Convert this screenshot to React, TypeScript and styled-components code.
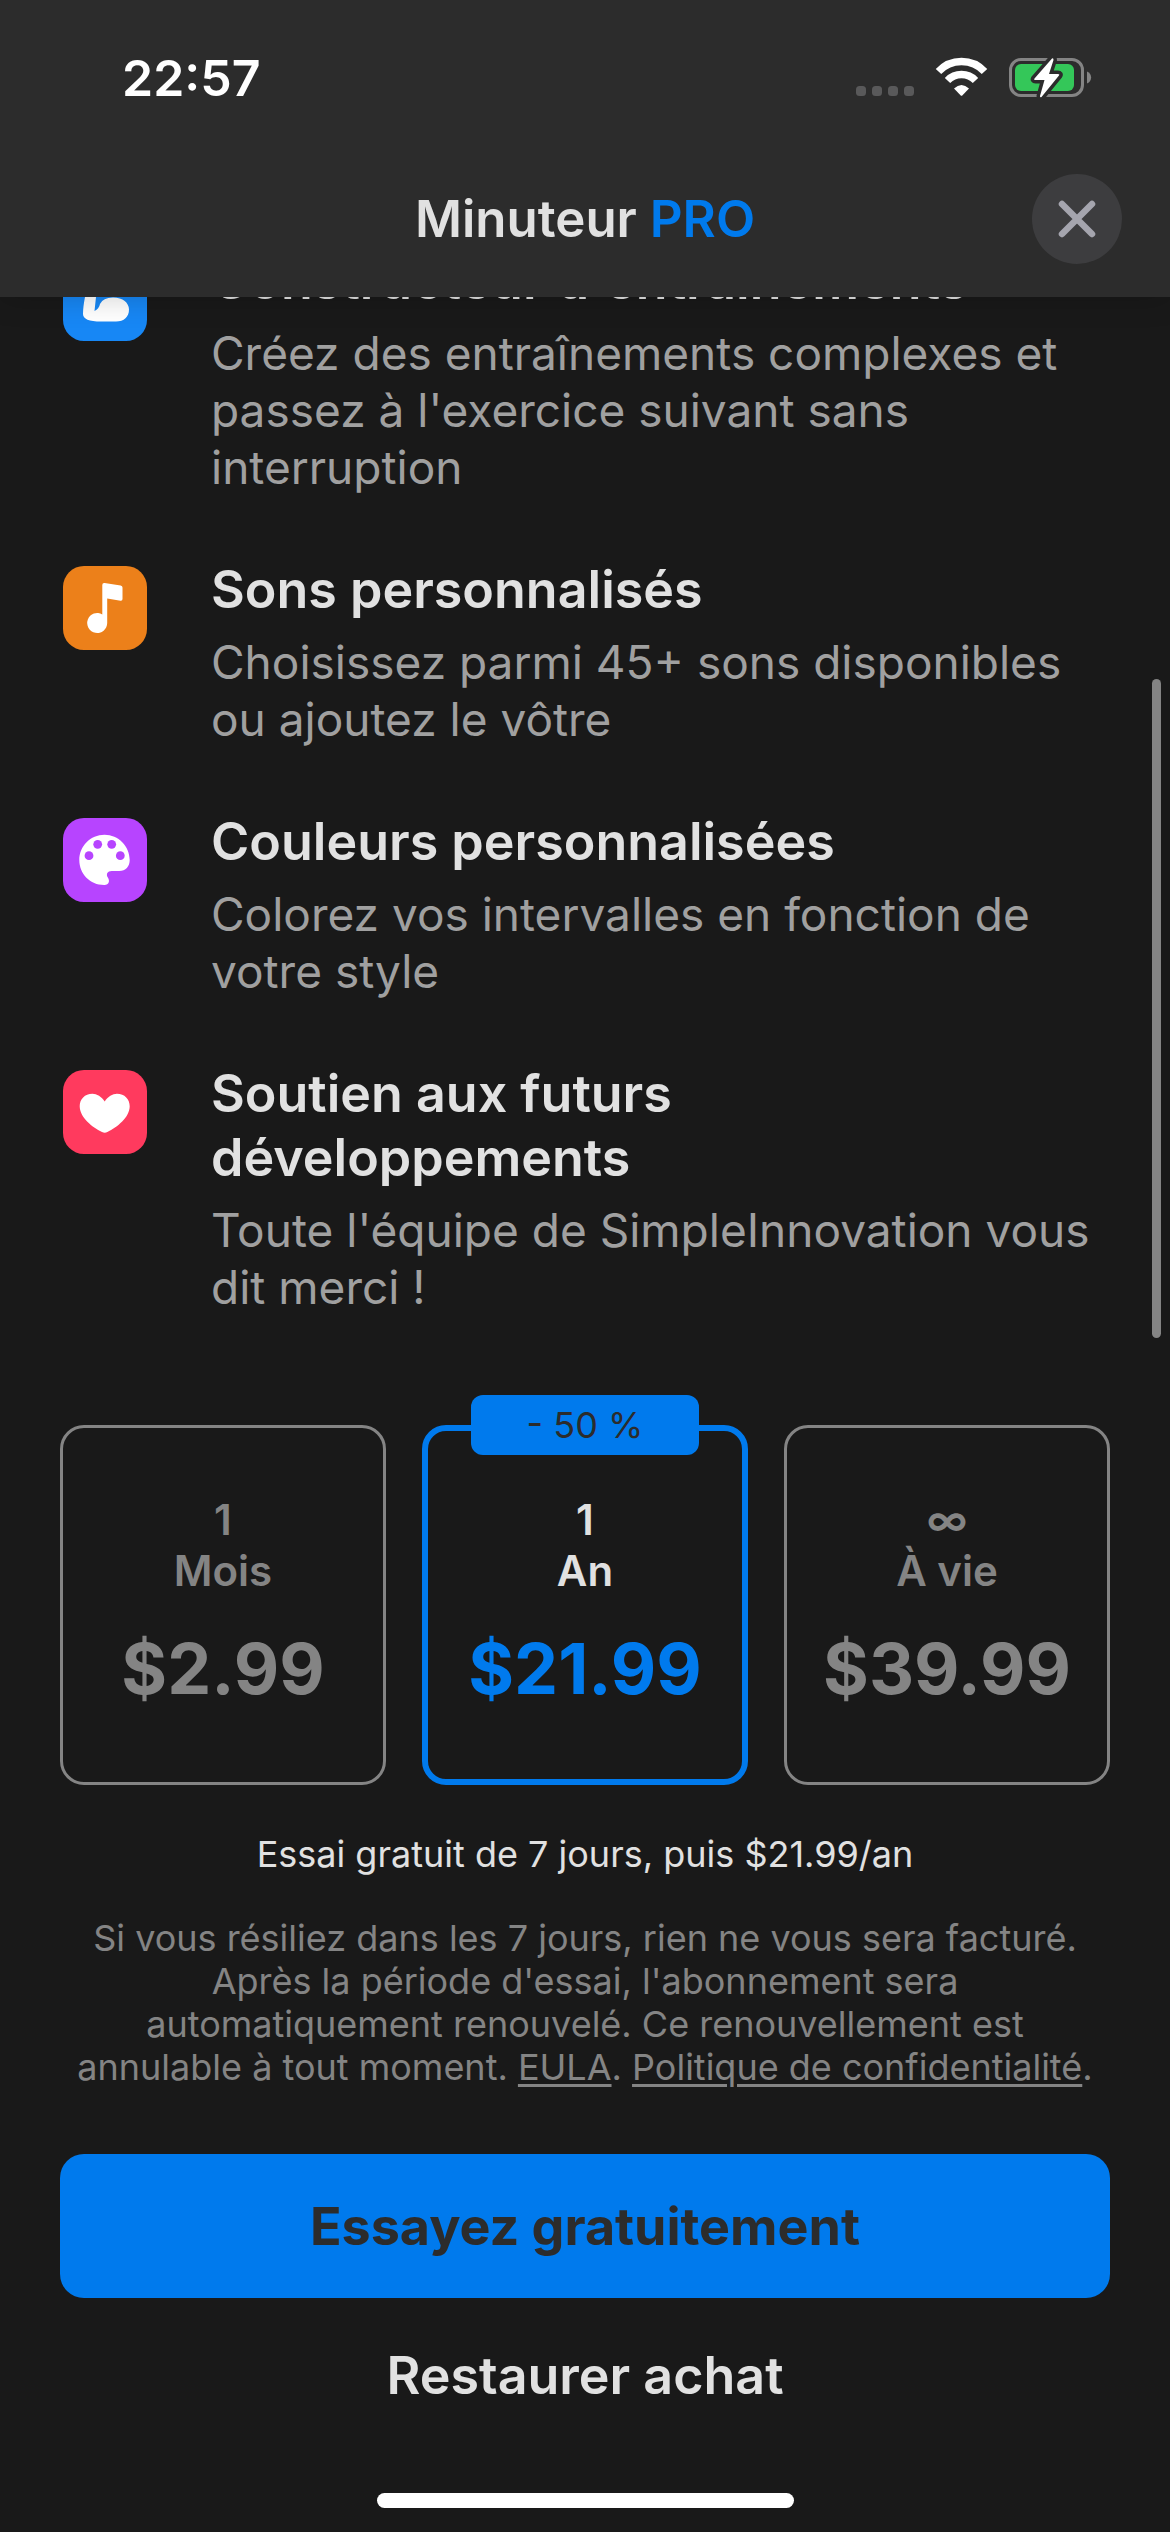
import React, { useState } from "react";
import styled, { createGlobalStyle } from "styled-components";

const blue = "#007aed";

const GlobalStyle = createGlobalStyle`
  * { box-sizing: border-box; }
  html, body { margin: 0; background: #191919; }
  body { font-family: Inter, "Liberation Sans", sans-serif; color: #e1e1e1; }
  button { font: inherit; border: 0; padding: 0; cursor: pointer; }
  h1, h2, p, ul { margin: 0; padding: 0; }
`;

const Screen = styled.div`
  position: relative;
  display: flex;
  flex-direction: column;
  min-height: 100vh;
  overflow: hidden;
`;

const Header = styled.header`
  position: relative;
  z-index: 1;
  background: #2c2c2c;
  box-shadow: 0 0 30px rgba(0, 0, 0, 0.2);
`;

const StatusBar = styled.div`
  display: flex;
  align-items: center;
  justify-content: space-between;
  height: 156px;
  padding: 0 78px 0 122px;
  color: #fff;
`;

const Clock = styled.time`
  font-size: 50px;
  line-height: 60px;
  font-weight: 600;
`;

const StatusIcons = styled.svg`
  display: block;
  width: 238px;
  height: 44px;
`;

const TitleBar = styled.div`
  display: grid;
  grid-template-columns: 90px 1fr 90px;
  align-items: center;
  height: 141px;
  padding: 0 48px 15px;
`;

const Title = styled.h1`
  grid-column: 2;
  text-align: center;
  font-size: 51px;
  line-height: 60px;
  font-weight: 600;
`;

const Accent = styled.span`
  color: ${blue};
`;

const CloseButton = styled.button`
  display: flex;
  align-items: center;
  justify-content: center;
  width: 90px;
  height: 90px;
  border-radius: 50%;
  background: #3d3d3f;
`;

const Content = styled.main`
  display: flex;
  flex-direction: column;
  margin-top: -48px;
  padding: 0 60px;
`;

const Features = styled.ul`
  display: flex;
  flex-direction: column;
  gap: 62px;
  list-style: none;
`;

const Feature = styled.li`
  display: flex;
  align-items: flex-start;
  gap: 64px;
  padding-left: 3px;
`;

const IconTile = styled.span<{ $color: string }>`
  display: flex;
  flex: none;
  width: 84px;
  height: 84px;
  margin-top: 8px;
  border-radius: 21px;
  background: ${(p) => p.$color};
`;

const FeatureText = styled.div`
  display: flex;
  flex-direction: column;
  gap: 12px;
`;

const FeatureTitle = styled.h2`
  max-width: 800px;
  font-size: 52px;
  line-height: 64px;
  font-weight: 600;
`;

const FeatureBody = styled.p`
  font-size: 46px;
  line-height: 57px;
  color: #a0a0a0;
`;

const Plans = styled.div`
  display: grid;
  grid-template-columns: repeat(3, 1fr);
  gap: 36px;
  margin-top: 109px;
`;

const Plan = styled.button<{ $active: boolean }>`
  position: relative;
  display: flex;
  flex-direction: column;
  align-items: center;
  justify-content: center;
  height: 360px;
  padding-bottom: 4px;
  border: ${(p) => (p.$active ? "6px" : "3px")} solid ${(p) => (p.$active ? blue : "#848484")};
  border-radius: 24px;
  background: transparent;
  color: ${(p) => (p.$active ? "#e1e1e1" : "#848484")};
`;

const Badge = styled.span`
  position: absolute;
  top: 0;
  left: 50%;
  width: 228px;
  transform: translate(-50%, -36px);
  border-radius: 12px;
  background: ${blue};
  color: #2c2c2c;
  font-size: 36px;
  line-height: 60px;
`;

const PlanLabel = styled.span`
  font-size: 42px;
  line-height: 51px;
  font-weight: 600;
`;

const PlanPrice = styled.span<{ $active: boolean }>`
  margin-top: 30px;
  font-size: 70px;
  line-height: 86px;
  font-weight: 700;
  color: ${(p) => (p.$active ? blue : "inherit")};
`;

const TrialNote = styled.p`
  margin-top: 48px;
  text-align: center;
  font-size: 36px;
  line-height: 43px;
`;

const Legal = styled.p`
  margin-top: 41px;
  text-align: center;
  font-size: 36px;
  line-height: 43px;
  color: #848484;
`;

const LegalLink = styled.a`
  color: inherit;
  text-decoration: underline;
  text-decoration-thickness: 3px;
  text-underline-offset: 4px;
`;

const PrimaryButton = styled.button`
  height: 144px;
  margin-top: 65px;
  border-radius: 24px;
  background: ${blue};
  color: #2c2c2c;
  font-size: 52px;
  font-weight: 700;
`;

const SecondaryButton = styled.button`
  align-self: center;
  height: 64px;
  margin-top: 46px;
  background: transparent;
  color: #e1e1e1;
  font-size: 52px;
  line-height: 64px;
  font-weight: 600;
`;

const HomeIndicator = styled.div`
  align-self: center;
  width: 417px;
  height: 15px;
  margin: auto 0 24px;
  border-radius: 8px;
  background: #fff;
`;

const ScrollThumb = styled.div`
  position: absolute;
  top: 679px;
  right: 9px;
  width: 9px;
  height: 659px;
  border-radius: 5px;
  background: #848484;
`;

const Arm = () => (
  <svg width="84" height="84" viewBox="0 0 84 84" fill="#fff" aria-hidden="true">
    <path d="M24 20h10l-1 20-1.500 14Q36 52 37 47 40 40.500 50 40.500C60 40.500 66 46 66 52.500 66 60 61 64.500 53 64.500H38C26 64.500 20 62 20 57q0-7 2-17z" />
  </svg>
);

const Note = () => (
  <svg width="84" height="84" viewBox="0 0 84 84" fill="#fff" aria-hidden="true">
    <path d="M39.300 19q0-2.300 2.300-2l16 2.500q1.900.300 1.900 2V33q0 2-2 1.700l-13.300-2.200V57a10 10 0 1 1-4.900-8.600z" />
  </svg>
);

const Palette = () => (
  <svg width="84" height="84" viewBox="0 0 84 84" aria-hidden="true">
    <path fill="#fff" d="M41.500 16.700C27.500 16.700 16.300 28 16.300 42s11 25.200 25.200 25c4.500 0 5.500-4 3.500-7.200-2.400-3.600-.5-6.800 3.700-6.800h7.500c6.500 0 10.500-4.500 10.500-11 0-14-11.300-25.300-25.200-25.300z" />
    <g fill="#b744ff">
      <circle cx="26" cy="37.700" r="4.400" />
      <circle cx="34.700" cy="26.300" r="4.400" />
      <circle cx="48.700" cy="26.300" r="4.400" />
      <circle cx="57.300" cy="37.700" r="4.400" />
    </g>
  </svg>
);

const Heart = () => (
  <svg width="84" height="84" viewBox="0 0 84 84" fill="#fff" aria-hidden="true">
    <path d="M41.700 31.500c-3-5-8-7.800-12.200-7.800-7.800 0-12.800 5.500-12.800 12.500 0 11 12.500 21 22.300 25.800q2.700 1.600 5.400 0c9.800-4.800 22.300-14.800 22.300-25.800 0-7-5-12.500-12.800-12.500-4.200 0-9.200 2.800-12.200 7.800z" />
  </svg>
);

const features = [
  { title: "Constructeur d'entraînements", body: "Créez des entraînements complexes et passez à l'exercice suivant sans interruption", color: "#1787f5", Icon: Arm },
  { title: "Sons personnalisés", body: "Choisissez parmi 45+ sons disponibles ou ajoutez le vôtre", color: "#ec801a", Icon: Note },
  { title: "Couleurs personnalisées", body: "Colorez vos intervalles en fonction de votre style", color: "#b744ff", Icon: Palette },
  { title: "Soutien aux futurs développements", body: "Toute l'équipe de SimpleInnovation vous dit merci !", color: "#ff3a5e", Icon: Heart },
];

const plans = [
  { count: "1", unit: "Mois", price: "$2.99" },
  { count: "1", unit: "An", price: "$21.99", badge: "- 50 %" },
  { count: "∞", unit: "À vie", price: "$39.99" },
];

export default function App() {
  const [selected, setSelected] = useState(1);
  return (
    <Screen>
      <GlobalStyle />
      <Header>
        <StatusBar>
          <Clock>22:57</Clock>
          <StatusIcons viewBox="0 0 238 44" aria-hidden="true">
            <g fill="#59595a">
              {[0, 16, 32, 48].map((x) => (
                <rect key={x} x={x + 2} y="30" width="10" height="10" rx="3.500" />
              ))}
            </g>
            <g fill="none" stroke="#fff" strokeWidth="7.500">
              <path d="M84.500 15.500a31.500 31.500 0 0 1 46 0" />
              <path d="M93.500 24.500a19.500 19.500 0 0 1 28 0" />
            </g>
            <path fill="#fff" d="M100 32.500q7.500-7 15 0l-6.500 6.800q-1 1-2 0z" />
            <rect x="156.500" y="3.500" width="72" height="36" rx="10.500" fill="none" stroke="#848484" strokeWidth="3" />
            <path fill="#848484" d="M233 15.500c5.500 2 5.500 10 0 12z" />
            <rect x="161" y="8" width="59" height="27" rx="6" fill="#34c759" />
            <path
              d="M198 2.500 180.500 22.500q-1 1.500 1 1.500h9l-4.500 16q0 2 1.500 1L205 19.500q1-1.500-1-1.500h-9l4.500-14q0-2.500-1.500-1.500z"
              fill="#fff" stroke="#2c2c2c" strokeWidth="7" strokeLinejoin="round" paintOrder="stroke"
            />
          </StatusIcons>
        </StatusBar>
        <TitleBar>
          <Title>Minuteur <Accent>PRO</Accent></Title>
          <CloseButton aria-label="Fermer">
            <svg width="38" height="38" viewBox="0 0 38 38" fill="none" stroke="#a5a5ae" strokeWidth="6.500" strokeLinecap="round" aria-hidden="true">
              <path d="M4 4l30 30M34 4L4 34" />
            </svg>
          </CloseButton>
        </TitleBar>
      </Header>
      <Content>
        <Features>
          {features.map(({ title, body, color, Icon }) => (
            <Feature key={title}>
              <IconTile $color={color}><Icon /></IconTile>
              <FeatureText>
                <FeatureTitle>{title}</FeatureTitle>
                <FeatureBody>{body}</FeatureBody>
              </FeatureText>
            </Feature>
          ))}
        </Features>
        <Plans>
          {plans.map((plan, i) => (
            <Plan key={plan.unit} $active={i === selected} aria-pressed={i === selected} onClick={() => setSelected(i)}>
              {plan.badge && <Badge>{plan.badge}</Badge>}
              <PlanLabel>{plan.count}</PlanLabel>
              <PlanLabel>{plan.unit}</PlanLabel>
              <PlanPrice $active={i === selected}>{plan.price}</PlanPrice>
            </Plan>
          ))}
        </Plans>
        <TrialNote>Essai gratuit de 7 jours, puis $21.99/an</TrialNote>
        <Legal>
          Si vous résiliez dans les 7 jours, rien ne vous sera facturé. Après la période d'essai, l'abonnement sera
          automatiquement renouvelé. Ce renouvellement est annulable à tout moment.{" "}
          <LegalLink href="#eula">EULA</LegalLink>. <LegalLink href="#privacy">Politique de confidentialité</LegalLink>.
        </Legal>
        <PrimaryButton>Essayez gratuitement</PrimaryButton>
        <SecondaryButton>Restaurer achat</SecondaryButton>
      </Content>
      <HomeIndicator />
      <ScrollThumb />
    </Screen>
  );
}
